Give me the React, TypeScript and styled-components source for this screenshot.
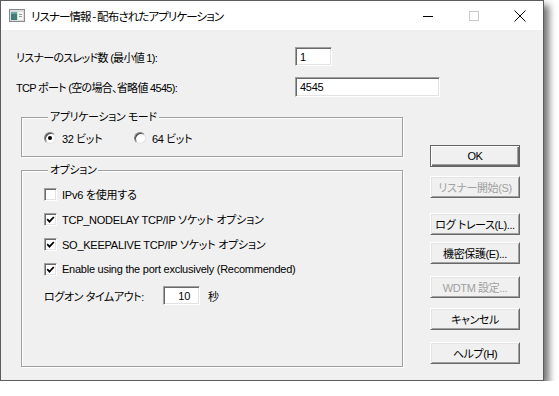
import styled, { createGlobalStyle } from "styled-components";

const GlobalStyle = createGlobalStyle`
  html, body {
    margin: 0;
    padding: 0;
    background: #ffffff;
  }
  body {
    font-family: "Liberation Sans", "Noto Sans CJK JP", sans-serif;
    font-size: 11px;
    letter-spacing: -0.4px;
    color: #000;
  }
`;

const Window = styled.div`
  width: 544px;
  height: 381px;
  box-sizing: border-box;
  border: 1px solid #5c5c5c;
  background: #f0f0f0;
  box-shadow: 5px 5px 7px rgba(0, 0, 0, 0.55);
  display: flex;
  flex-direction: column;
  font-feature-settings: "palt";
`;

const TitleBar = styled.div`
  height: 29px;
  background: #fff;
  display: flex;
  align-items: center;
  padding-left: 8px;
`;

const TitleText = styled.div`
  flex: 1;
  margin-left: 6px;
  font-family: "Noto Sans CJK JP", sans-serif;
  font-size: 11.5px;
  letter-spacing: -0.9px;
`;

const Controls = styled.div`
  display: flex;
  height: 100%;
`;

const ControlButton = styled.div`
  width: 46px;
  height: 100%;
  display: flex;
  align-items: center;
  justify-content: center;
`;

const Body = styled.div`
  flex: 1;
  display: flex;
  padding: 17px 0 0 15px;
`;

const LeftColumn = styled.div`
  width: 387px;
  display: flex;
  flex-direction: column;
`;

const FieldRow = styled.div<{ $mt?: number }>`
  display: grid;
  grid-template-columns: 279px auto;
  align-items: center;
  margin-top: ${(p) => p.$mt ?? 0}px;
  letter-spacing: -0.7px;
`;

const TextBox = styled.div<{ $w: number; $h: number; $right?: boolean }>`
  width: ${(p) => p.$w}px;
  height: ${(p) => p.$h}px;
  box-sizing: border-box;
  background: #fff;
  border-style: solid;
  border-width: 1px;
  border-color: #a0a0a0 #fff #fff #a0a0a0;
  box-shadow: inset 1px 1px 0 #696969, inset -1px -1px 0 #e3e3e3;
  padding: 0 ${(p) => (p.$right ? 9 : 4)}px 0 4px;
  display: flex;
  align-items: center;
  justify-content: ${(p) => (p.$right ? "flex-end" : "flex-start")};
  letter-spacing: -0.3px;
`;

const Group = styled.fieldset<{ $mt: number; $pb: number }>`
  margin: ${(p) => p.$mt}px 0 0 5px;
  width: 382px;
  box-sizing: border-box;
  padding: 0 0 ${(p) => p.$pb}px 22px;
  border: 1px solid #a0a0a0;
  box-shadow: inset 1px 1px 0 #fff, 1px 1px 0 #fff;
  min-width: 0;
`;

const Legend = styled.legend`
  margin-left: 4px;
  padding: 0 2px 0 2px;
  line-height: 14px;
  background: #f0f0f0;
`;

const RadioRow = styled.div`
  display: grid;
  grid-template-columns: 90px 90px;
  margin-top: 6px;
  height: 14px;
  align-items: center;
`;

const Choice = styled.label`
  display: flex;
  align-items: center;
  gap: 6px;
  white-space: nowrap;
`;

const RadioCircle = styled.span<{ $on?: boolean }>`
  width: 12px;
  height: 12px;
  box-sizing: border-box;
  border-radius: 50%;
  background: #fff;
  border: 1px solid;
  border-color: #808080 #e3e3e3 #e3e3e3 #808080;
  box-shadow: inset 1px 1px 0 #404040;
  display: flex;
  align-items: center;
  justify-content: center;
  &::after {
    content: "";
    display: ${(p) => (p.$on ? "block" : "none")};
    width: 4px;
    height: 4px;
    border-radius: 50%;
    background: #000;
  }
`;

const OptionList = styled.div`
  display: flex;
  flex-direction: column;
  gap: 9px;
  padding-top: 9px;
`;

const CheckRow = styled.label`
  display: flex;
  align-items: center;
  gap: 5px;
  height: 16px;
  white-space: nowrap;
  letter-spacing: -0.25px;
`;

const CheckBox = styled.span`
  width: 13px;
  height: 13px;
  box-sizing: border-box;
  background: #fff;
  border: 1px solid;
  border-color: #a0a0a0 #fff #fff #a0a0a0;
  box-shadow: inset 1px 1px 0 #696969, inset -1px -1px 0 #e3e3e3;
  display: flex;
  align-items: center;
  justify-content: center;
`;

const TimeoutRow = styled.div`
  display: grid;
  grid-template-columns: 111px 37px auto;
  align-items: center;
  column-gap: 8px;
`;

const ButtonColumn = styled.div`
  margin-left: 27px;
  padding-top: 98px;
  display: flex;
  flex-direction: column;
`;

const Button = styled.div<{ $mt: number; $disabled?: boolean; $default?: boolean }>`
  width: 90px;
  height: 22px;
  box-sizing: border-box;
  margin-top: ${(p) => p.$mt}px;
  display: flex;
  align-items: center;
  justify-content: center;
  background: #f0f0f0;
  color: ${(p) => (p.$disabled ? "#a0a0a0" : "#000")};
  border: 1px solid;
  border-color: ${(p) =>
    p.$default ? "#646464" : "#fff #696969 #696969 #fff"};
  box-shadow: ${(p) =>
    p.$default
      ? "inset 1px 1px 0 #fff, inset -1px -1px 0 #696969, inset -2px -2px 0 #a0a0a0"
      : "inset 1px 1px 0 #e3e3e3, inset -1px -1px 0 #a0a0a0"};
  white-space: nowrap;
`;

const AppIcon = () => (
  <svg width="16" height="13" viewBox="0 0 16 13">
    <rect x="0.5" y="0.5" width="15" height="12" fill="#dcdcdc" stroke="#8a8a8a" />
    <rect x="2" y="3" width="6" height="8" fill="#3f7f78" />
    <rect x="2" y="3" width="6" height="2" fill="#6aa9a2" />
    <rect x="9" y="3" width="5" height="8" fill="#f4f4f4" />
    <rect x="10" y="5" width="3" height="1" fill="#9a9a9a" />
    <rect x="10" y="7" width="3" height="1" fill="#9a9a9a" />
  </svg>
);

const Check = () => (
  <svg width="9" height="9" viewBox="0 0 9 9">
    <path d="M1.2 4.2 L3.5 6.6 L7.8 2" fill="none" stroke="#000" strokeWidth="1.8" />
  </svg>
);

const options = [
  { text: "IPv6 を使用する", on: false },
  { text: "TCP_NODELAY TCP/IP ソケット オプション", on: true },
  { text: "SO_KEEPALIVE TCP/IP ソケット オプション", on: true },
  { text: "Enable using the port exclusively (Recommended)", on: true },
];

const buttons = [
  { label: "OK", mt: 0, def: true },
  { label: "リスナー開始(S)", mt: 9, disabled: true },
  { label: "ログ トレース(L)...", mt: 15 },
  { label: "機密保護(E)...", mt: 7 },
  { label: "WDTM 設定...", mt: 12, disabled: true },
  { label: "キャンセル", mt: 10 },
  { label: "ヘルプ(H)", mt: 12 },
];

export default function App() {
  return (
    <>
      <GlobalStyle />
      <Window>
        <TitleBar>
          <AppIcon />
          <TitleText>リスナー情報 - 配布されたアプリケーション</TitleText>
          <Controls>
            <ControlButton>
              <svg width="10" height="10" viewBox="0 0 10 10">
                <line x1="0" y1="5.5" x2="10" y2="5.5" stroke="#000" />
              </svg>
            </ControlButton>
            <ControlButton>
              <svg width="10" height="10" viewBox="0 0 10 10">
                <rect x="0.5" y="0.5" width="9" height="9" fill="none" stroke="#c8c8c8" />
              </svg>
            </ControlButton>
            <ControlButton>
              <svg width="12" height="12" viewBox="0 0 12 12">
                <path d="M0.5 0.5 L11.5 11.5 M11.5 0.5 L0.5 11.5" stroke="#000" />
              </svg>
            </ControlButton>
          </Controls>
        </TitleBar>
        <Body>
          <LeftColumn>
            <FieldRow>
              <span>リスナーのスレッド数 (最小値 1):</span>
              <TextBox $w={37} $h={19}>1</TextBox>
            </FieldRow>
            <FieldRow $mt={11}>
              <span>TCP ポート (空の場合、省略値 4545):</span>
              <TextBox $w={145} $h={20}>4545</TextBox>
            </FieldRow>

            <Group $mt={13} $pb={12}>
              <Legend>アプリケーション モード</Legend>
              <RadioRow>
                <Choice>
                  <RadioCircle $on />
                  32 ビット
                </Choice>
                <Choice>
                  <RadioCircle />
                  64 ビット
                </Choice>
              </RadioRow>
            </Group>

            <Group $mt={6} $pb={61}>
              <Legend>オプション</Legend>
              <OptionList>
                {options.map((o) => (
                  <CheckRow key={o.text}>
                    <CheckBox>{o.on && <Check />}</CheckBox>
                    {o.text}
                  </CheckRow>
                ))}
                <TimeoutRow>
                  <span>ログオン タイムアウト:</span>
                  <TextBox $w={37} $h={19} $right>
                    10
                  </TextBox>
                  <span>秒</span>
                </TimeoutRow>
              </OptionList>
            </Group>
          </LeftColumn>

          <ButtonColumn>
            {buttons.map((b) => (
              <Button key={b.label} $mt={b.mt} $disabled={b.disabled} $default={b.def}>
                {b.label}
              </Button>
            ))}
          </ButtonColumn>
        </Body>
      </Window>
    </>
  );
}
